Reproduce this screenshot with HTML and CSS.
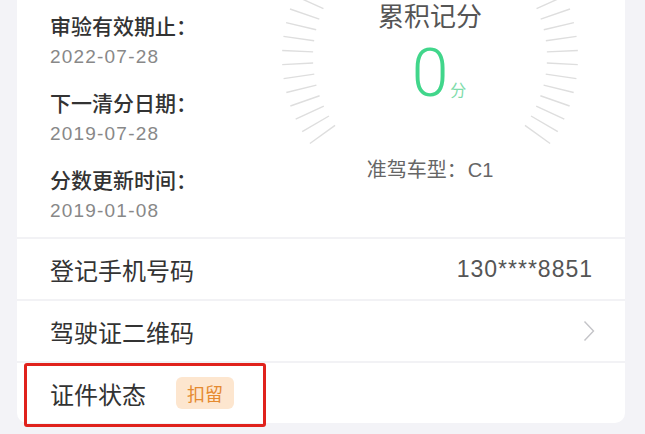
FILE: index.html
```html
<!DOCTYPE html>
<html lang="zh-CN">
<head>
<meta charset="UTF-8">
<meta name="viewport" content="width=device-width, initial-scale=1.0">
<title>驾驶证详情</title>
<link rel="stylesheet" href="styles.css">
</head>
<body>
<div class="card">
    <div class="summary">
        <div class="info">
            <div class="info-item">
                <div class="info-label">审验有效期止：</div>
                <div class="info-value">2022-07-28</div>
            </div>
            <div class="info-item">
                <div class="info-label">下一清分日期：</div>
                <div class="info-value">2019-07-28</div>
            </div>
            <div class="info-item">
                <div class="info-label">分数更新时间：</div>
                <div class="info-value">2019-01-08</div>
            </div>
        </div>
        <div class="gauge">
            <svg class="gauge-ticks" id="gaugeTicks" width="300" height="300" viewBox="0 0 300 300"></svg>
            <div class="gauge-title">累积记分</div>
            <div class="gauge-score"><span class="score-num">0</span><span class="score-unit">分</span></div>
            <div class="gauge-type">准驾车型：<span class="type-code">C1</span></div>
        </div>
    </div>
    <div class="row">
        <span class="row-label">登记手机号码</span>
        <span class="row-value">130****8851</span>
    </div>
    <div class="row">
        <span class="row-label">驾驶证二维码</span>
        <svg class="chevron" width="12" height="22" viewBox="0 0 12 22"><polyline points="1.5,1.5 10.5,11 1.5,20.5" fill="none" stroke="#c4c4c8" stroke-width="1.4"/></svg>
    </div>
    <div class="row row-status">
        <span class="row-label">证件状态</span>
        <span class="badge">扣留</span>
    </div>
</div>
<div class="highlight"></div>
<script>
    // tick marks round the score, open at the bottom
    var svg = document.getElementById('gaugeTicks');
    var count = 47;
    for (var i = 0; i < count; i++) {
        var a = (215.75 - i * 251.5 / (count - 1)) * Math.PI / 180;
        var line = document.createElementNS('http://www.w3.org/2000/svg', 'line');
        line.setAttribute('x1', 150 + 117 * Math.cos(a));
        line.setAttribute('y1', 150 - 117 * Math.sin(a));
        line.setAttribute('x2', 150 + 148 * Math.cos(a));
        line.setAttribute('y2', 150 - 148 * Math.sin(a));
        line.setAttribute('stroke', '#dedede');
        line.setAttribute('stroke-width', '1.4');
        svg.appendChild(line);
    }
</script>
</body>
</html>
```

FILE: styles.css
```css
html, body {
    height: 100%;
}

body {
    position: relative;
    margin: 0;
    padding: 0;
    background-color: #f3f3f7;
    font-family: "Liberation Sans", "Noto Sans CJK SC", sans-serif;
    color: #333;
}

.card {
    margin-left: 17px;
    width: 608px;
    background-color: #fff;
    border-radius: 0 0 10px 10px;
}

.summary {
    display: flex;
    height: 237px;
}

.info {
    width: 263px;
    padding: 15px 0 0 33px;
    box-sizing: border-box;
}
.info-item + .info-item {
    margin-top: 23px;
}
.info-label {
    font-size: 21px;
    line-height: 24px;
    font-weight: 500;
    color: #333;
}
.info-value {
    margin-top: 6px;
    font-size: 19px;
    line-height: 24px;
    letter-spacing: 1.2px;
    color: #888;
}

.gauge {
    position: relative;
    width: 300px;
    height: 300px;
    margin-top: -93px;
    padding-top: 97px;
    box-sizing: border-box;
    display: flex;
    flex-direction: column;
    align-items: center;
}
.gauge-ticks {
    position: absolute;
    left: 0;
    top: 0;
}
.gauge-title {
    font-size: 26px;
    line-height: 26px;
    color: #555;
}
.gauge-score {
    display: flex;
    align-items: baseline;
    margin-top: 11px;
    padding-left: 18px;
    height: 66px;
}
.score-num {
    font-family: Roboto, sans-serif;
    font-weight: 300;
    font-size: 66px;
    line-height: 66px;
    color: #41d68b;
}
.score-unit {
    margin-left: 2px;
    font-size: 16px;
    color: #7fdcab;
}
.gauge-type {
    margin-top: 53px;
    font-size: 20px;
    line-height: 20px;
    color: #666;
}
.type-code {
    margin-left: 1px;
}

.row {
    display: flex;
    align-items: center;
    justify-content: space-between;
    height: 60px;
    padding: 0 30px 0 33px;
    border-top: 2px solid #f2f2f5;
}
.row-label {
    font-size: 24px;
    color: #333;
}
.row-value {
    font-size: 23px;
    letter-spacing: 1px;
    color: #555;
    margin-right: 2px;
}
.row-status {
    justify-content: flex-start;
}

.badge {
    margin-left: 30px;
    width: 58px;
    height: 32px;
    border-radius: 6px;
    background-color: #fde6cf;
    color: #e58a2f;
    font-size: 18px;
    display: flex;
    align-items: center;
    justify-content: center;
}

/* red annotation frame over the status row */
.highlight {
    position: absolute;
    left: 24px;
    top: 363px;
    width: 242px;
    height: 64px;
    box-sizing: border-box;
    border: 3px solid #e0221c;
    border-radius: 3px;
}
```
